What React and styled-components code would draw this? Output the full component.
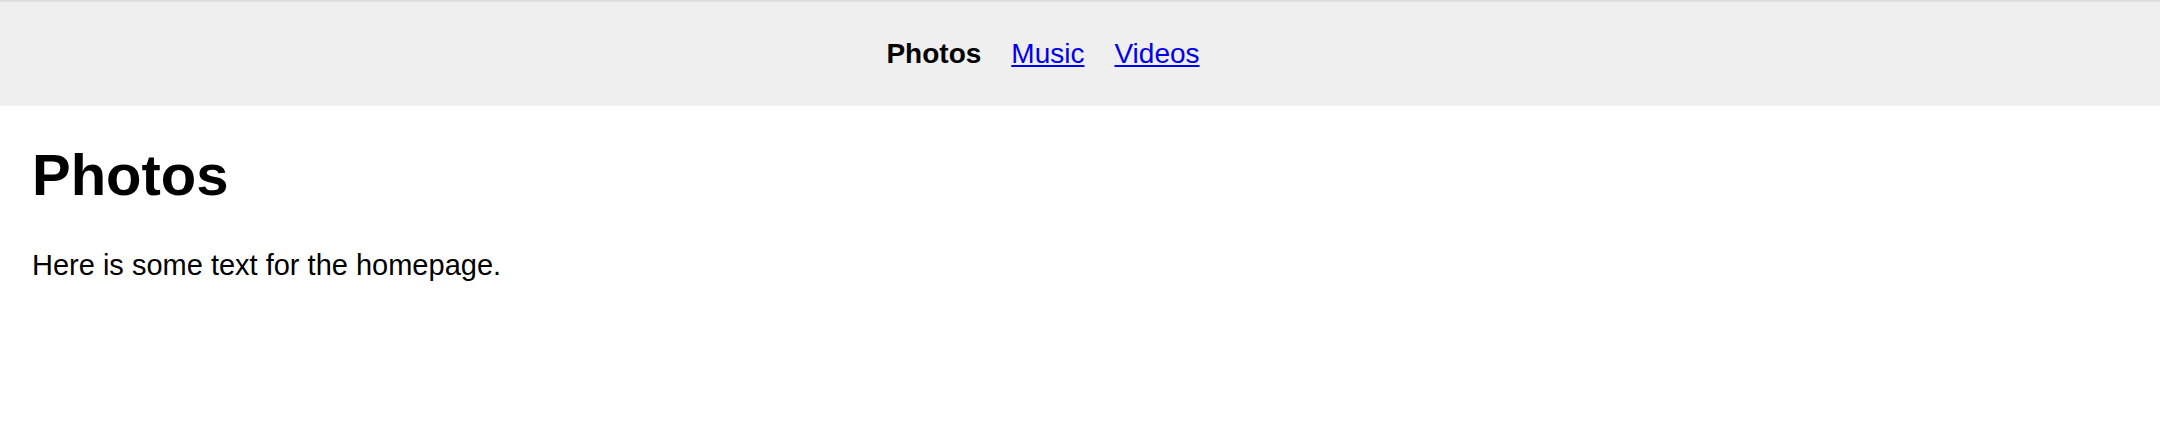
import React from 'react';
import styled, { createGlobalStyle } from 'styled-components';

const GlobalStyle = createGlobalStyle`
  html, body {
    margin: 0;
    padding: 0;
    background: #fff;
    font-family: "Liberation Sans", Arial, sans-serif;
    color: #000;
  }
`;

const Page = styled.div`
  border-top: 2px solid #dcdce1;
`;

const NavBar = styled.nav`
  height: 104px;
  background: #efefef;
  display: flex;
  align-items: center;
  justify-content: center;
  padding-right: 74px;
  box-sizing: border-box;
`;

const NavList = styled.ul`
  display: flex;
  gap: 30px;
  margin: 0;
  padding: 0;
  list-style: none;
  font-size: 28px;
  line-height: 1.15;
`;

const NavItem = styled.li`
  font-weight: ${(p) => (p.$active ? 700 : 400)};
`;

const NavLink = styled.a`
  color: #0000ee;
  text-decoration: underline;
`;

const Main = styled.main`
  padding: 36px 32px 0;
`;

const Title = styled.h1`
  margin: 0;
  font-size: 58px;
  font-weight: 700;
  line-height: 1.15;
`;

const Text = styled.p`
  margin: 40px 0 0;
  font-size: 29px;
  line-height: 1.15;
`;

const links = ['Photos', 'Music', 'Videos'];

const App = () => {
  const current = 'Photos';
  return (
    <Page>
      <GlobalStyle />
      <NavBar>
        <NavList>
          {links.map((name) => (
            <NavItem key={name} $active={name === current}>
              {name === current ? name : <NavLink href="#">{name}</NavLink>}
            </NavItem>
          ))}
        </NavList>
      </NavBar>
      <Main>
        <Title>{current}</Title>
        <Text>Here is some text for the homepage.</Text>
      </Main>
    </Page>
  );
};

export default App;
